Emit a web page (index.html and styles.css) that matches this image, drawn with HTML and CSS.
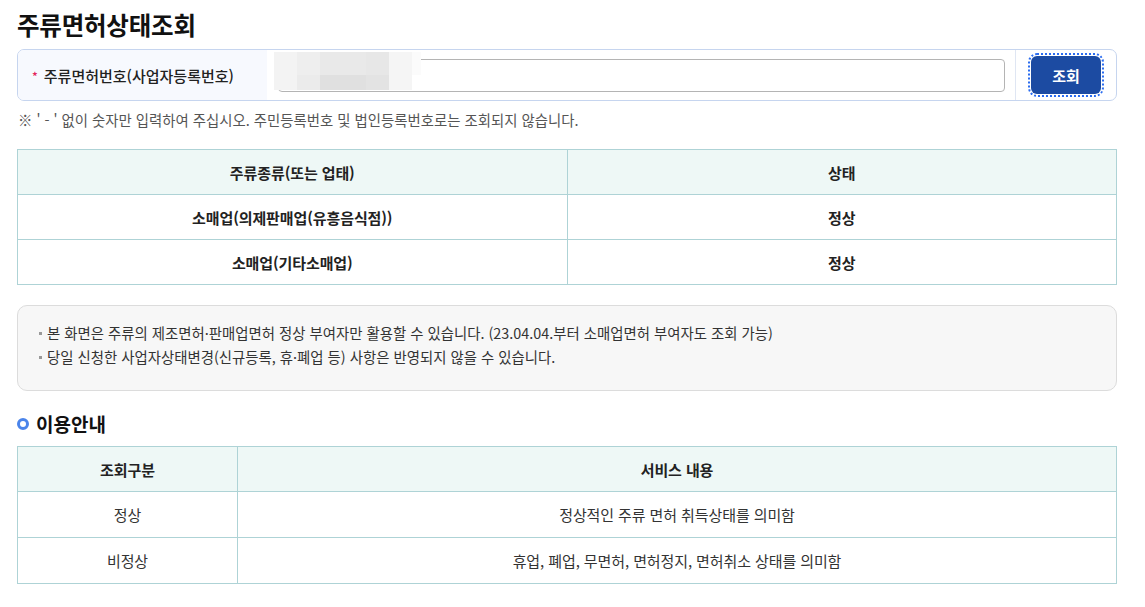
FILE: index.html
```html
<!DOCTYPE html>
<html lang="ko">
<head>
    <meta charset="UTF-8">
    <meta name="viewport" content="width=device-width, initial-scale=1.0">
    <title>주류면허상태조회</title>
    <link rel="stylesheet" href="styles.css">
</head>
<body>
    <div class="page">
        <h1 class="page-title">주류면허상태조회</h1>

        <div class="search-box">
            <div class="search-label"><span class="req">*</span>주류면허번호(사업자등록번호)</div>
            <div class="search-input">
                <input type="text" class="text-input" aria-label="주류면허번호">
                <div class="mosaic" aria-hidden="true">
                    <span class="m1"></span><span class="m2"></span><span class="m3"></span><span class="m3"></span><span class="m4"></span><span class="m5"></span><span class="m6"></span>
                    <span class="m1"></span><span class="m2b"></span><span class="m3b"></span><span class="m3b"></span><span class="m4b"></span><span class="m5"></span><span class="m7"></span>
                </div>
            </div>
            <div class="search-btn-cell">
                <button class="btn-search">조회</button>
            </div>
        </div>
        <p class="note">※ ' - ' 없이 숫자만 입력하여 주십시오. 주민등록번호 및 법인등록번호로는 조회되지 않습니다.</p>

        <table class="grid-table result-table">
            <colgroup>
                <col class="col-half">
                <col class="col-half">
            </colgroup>
            <thead>
                <tr><th>주류종류(또는 업태)</th><th>상태</th></tr>
            </thead>
            <tbody>
                <tr><td>소매업(의제판매업(유흥음식점))</td><td>정상</td></tr>
                <tr><td>소매업(기타소매업)</td><td>정상</td></tr>
            </tbody>
        </table>

        <div class="info-box">
            <ul>
                <li>본 화면은 주류의 제조면허·판매업면허 정상 부여자만 활용할 수 있습니다. (23.04.04.부터 소매업면허 부여자도 조회 가능)</li>
                <li>당일 신청한 사업자상태변경(신규등록, 휴·폐업 등) 사항은 반영되지 않을 수 있습니다.</li>
            </ul>
        </div>

        <h2 class="section-title"><span class="dot"></span>이용안내</h2>

        <table class="grid-table guide-table">
            <colgroup>
                <col class="col-kind">
                <col>
            </colgroup>
            <thead>
                <tr><th>조회구분</th><th>서비스 내용</th></tr>
            </thead>
            <tbody>
                <tr><td>정상</td><td>정상적인 주류 면허 취득상태를 의미함</td></tr>
                <tr><td>비정상</td><td>휴업, 폐업, 무면허, 면허정지, 면허취소 상태를 의미함</td></tr>
            </tbody>
        </table>
    </div>
</body>
</html>
```

FILE: styles.css
```css
body {
    margin: 0;
    font-family: "Noto Sans CJK KR", "Noto Sans", sans-serif;
    color: #222;
    background: #fff;
}

.page {
    width: 1100px;
    margin-left: 17px;
    padding-top: 9px;
}

.page-title {
    margin: 0;
    font-size: 24.5px;
    font-weight: 700;
    line-height: 32px;
    color: #111;
    letter-spacing: -0.2px;
}

/* search */
.search-box {
    display: flex;
    margin-top: 8px;
    height: 50px;
    border: 1px solid #c6d5ef;
    border-radius: 7px;
    overflow: hidden;
}

.search-label {
    width: 235px;
    padding-left: 14px;
    background: #f7f9fe;
    display: flex;
    align-items: center;
    font-size: 15px;
    font-weight: 500;
    color: #222;
}

.req {
    color: #e3245a;
    font-size: 12px;
    margin-right: 6px;
}

.search-input {
    flex: 1;
    position: relative;
    display: flex;
    align-items: center;
    padding: 0 10px 0 11px;
}

.text-input {
    width: 100%;
    height: 33px;
    box-sizing: border-box;
    border: 1px solid #b4b4b4;
    border-radius: 4px;
    background: #fff;
}

.mosaic {
    position: absolute;
    left: 7px;
    top: 2px;
    display: grid;
    grid-template-columns: repeat(6, 23px) 9px;
    grid-template-rows: 23px 15px;
}

.m1 { background: #f3f3f3; }
.m2 { background: #eeeeee; }
.m3 { background: #e9e9e9; }
.m4 { background: #e7e7e7; }
.m5 { background: #f5f5f5; }
.m6 { background: #fbfbfb; }
.m7 { background: #ffffff; }
.m2b { background: #ebebeb; }
.m3b { background: #e0e0e0; }
.m4b { background: #e3e3e3; }

.search-btn-cell {
    width: 100px;
    border-left: 1px solid #dfe6f3;
    display: flex;
    align-items: center;
    justify-content: center;
}

.btn-search {
    width: 70px;
    height: 38px;
    border: none;
    border-radius: 6px;
    background: #1c4ba2;
    color: #fff;
    font-family: inherit;
    font-size: 15px;
    font-weight: 700;
    outline: 2px dotted #2a6cf0;
    outline-offset: 1px;
}

.note {
    margin: 9px 0 0 1px;
    font-size: 14.4px;
    color: #555;
    line-height: 20px;
}

/* tables */
.grid-table {
    width: 100%;
    border-collapse: collapse;
    font-size: 15px;
    letter-spacing: -0.1px;
}

.grid-table th,
.grid-table td {
    height: 44px;
    padding: 0 10px;
    border: 1px solid #aed3d6;
    text-align: center;
    color: #222;
}

.grid-table th {
    background: #eef8f6;
    font-weight: 700;
}

.result-table {
    margin-top: 19px;
    table-layout: fixed;
}

.col-half {
    width: 50%;
}

.result-table td {
    font-weight: 700;
}

.guide-table td {
    color: #333;
}

.col-kind {
    width: 220px;
}

/* info */
.info-box {
    margin-top: 20px;
    height: 84px;
    border: 1px solid #dcdcdc;
    border-radius: 10px;
    background: #f7f7f7;
}

.info-box ul {
    margin: 0;
    padding: 15px 0 0 20px;
    list-style: none;
}

.info-box li {
    position: relative;
    padding-left: 9px;
    font-size: 14.4px;
    line-height: 24px;
    color: #333;
}

.info-box li::before {
    content: "";
    position: absolute;
    left: 1px;
    top: 11px;
    width: 3px;
    height: 3px;
    background: #999;
}

.section-title {
    display: flex;
    align-items: center;
    gap: 7px;
    margin: 21px 0 0;
    font-size: 19px;
    font-weight: 700;
    line-height: 24px;
    color: #111;
}

.dot {
    width: 6px;
    height: 6px;
    border: 3px solid #4a84ea;
    border-radius: 50%;
}

.guide-table {
    margin-top: 10px;
}

.guide-table td {
    height: 45px;
}
```
